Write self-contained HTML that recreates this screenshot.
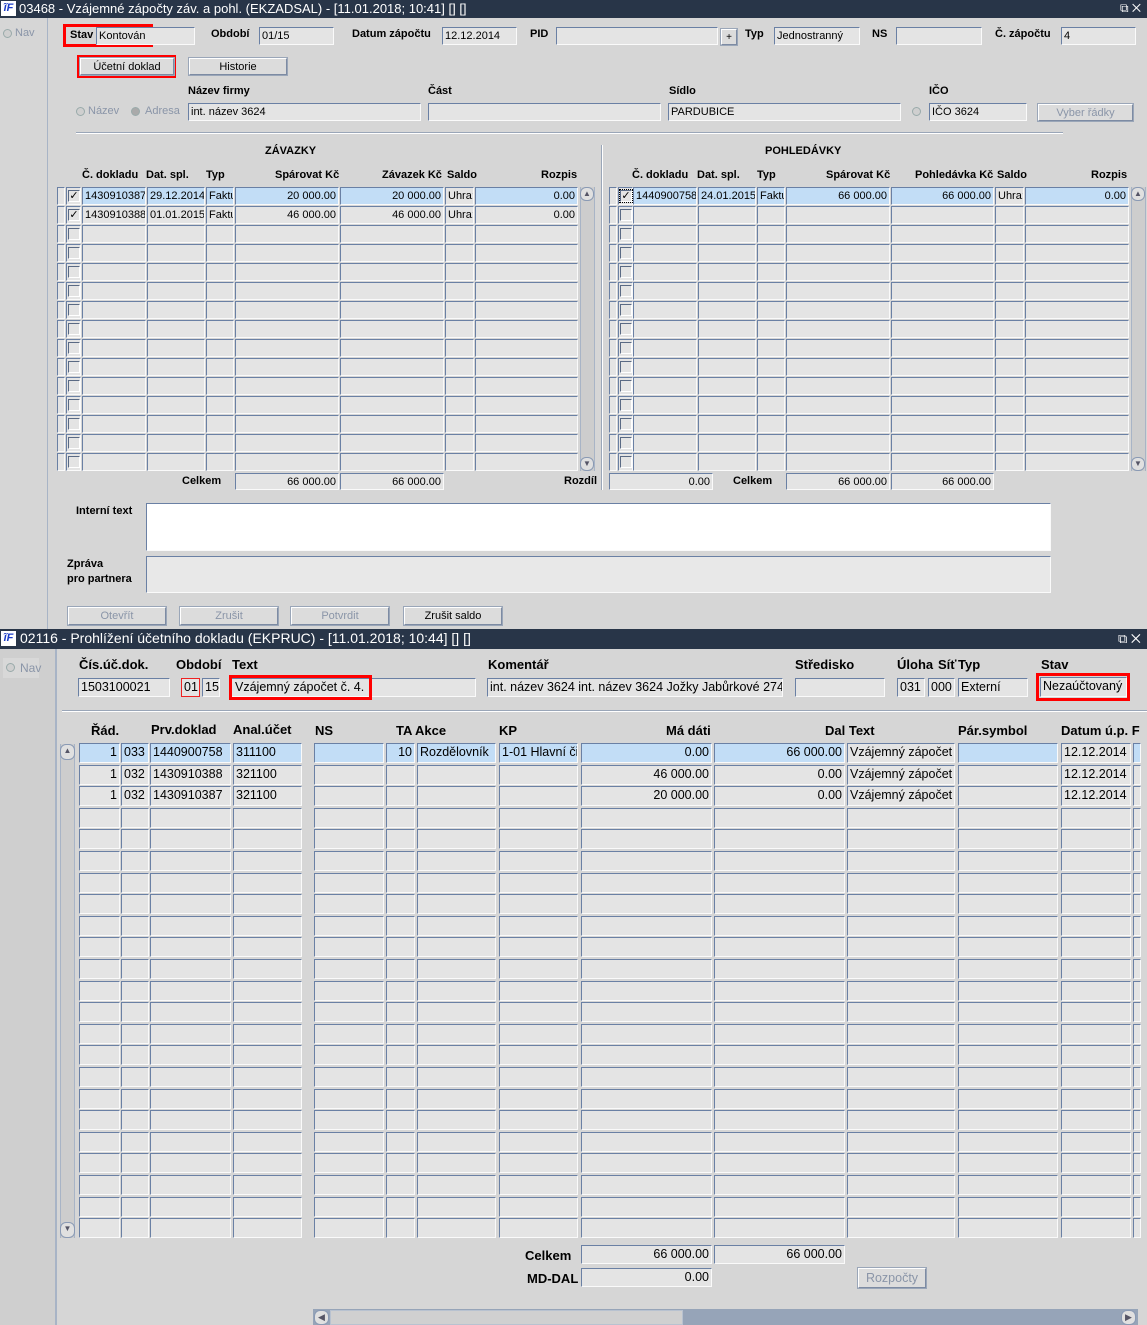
<!DOCTYPE html>
<html><head><meta charset="utf-8">
<style>
*{margin:0;padding:0;box-sizing:border-box}
body{width:1147px;height:1325px;position:relative;background:#d6d6d6;font-family:"Liberation Sans",Arial,sans-serif;color:#000;overflow:hidden}
div,span{position:absolute}
.tb{left:0;width:1147px;background:#283548;color:#fff;font-size:13px;white-space:nowrap}
.tb .lg{left:1px;top:1px;width:15px;height:15px;background:#fff;color:#1a3cc8;font:bold italic 11px "Liberation Sans",sans-serif;text-align:center;line-height:15px}
.f{background:#e4e4e4;border:1px solid;border-color:#6a80a4 #fafafa #fafafa #6a80a4;font-size:11px;padding-left:2px;white-space:nowrap;overflow:hidden;line-height:16px}
.b .f,.b.f{font-size:12.5px}
.s{background:#c2ddf6}
.r{text-align:right;padding-right:2px;padding-left:0}
.l{font-weight:bold;font-size:11px;white-space:nowrap}
.L{font-weight:bold;font-size:13px;white-space:nowrap}
.btn{background:#dcdcdc;border:1px solid;border-color:#fff #7d8ba3 #7d8ba3 #fff;font-size:11px;text-align:center;line-height:16px;box-shadow:0 0 0 1px #9aa6b8}
.dis{color:#8a95a8}
.red{border:3px solid #f00}
.rad{width:9px;height:9px;border-radius:50%;background:#cfcfcf;border:1px solid #9aa}
.cb{width:12px;height:12px;background:#e4e4e4;border:1px solid;border-color:#5a6a84 #fff #fff #5a6a84;font-size:11px;line-height:10px;text-align:center}
.sb{background:#cdcdcd;border-left:1px solid #a8b4c6;border-right:1px solid #a8b4c6}
.ar{width:14px;height:14px;border:1px solid #8a9ab4;border-radius:6px;background:#e0e0e0;font-size:8px;line-height:12px;text-align:center;color:#556}
</style></head><body>

<!-- TOP WINDOW -->
<div class="tb" style="top:0;height:18px;line-height:17px"><div class="lg">ĩF</div><span style="left:19px;top:0">03468 - Vzájemné zápočty záv. a pohl. (EKZADSAL) - [11.01.2018; 10:41] [] []</span><span style="left:1120px;top:0;font-size:12px">⧉ ✕</span></div>
<div style="left:0;top:18px;width:48px;height:611px;background:#d6d6d6;border-right:1px solid #a8b4c6"></div>
<div class="rad" style="left:3px;top:29px"></div><div style="left:15px;top:27px;font-size:11px;color:#8a95a8">Nav</div>

<div class="red" style="left:63px;top:24px;width:90px;height:23px"></div>
<div class="l" style="left:70px;top:29px">Stav</div>
<div class="f" style="left:96px;top:27px;width:99px;height:18px">Kontován</div>
<div class="l" style="left:211px;top:28px">Období</div><div class="f" style="left:259px;top:27px;width:75px;height:18px">01/15</div>
<div class="l" style="left:352px;top:28px">Datum zápočtu</div><div class="f" style="left:442px;top:27px;width:75px;height:18px">12.12.2014</div>
<div class="l" style="left:530px;top:28px">PID</div><div class="f" style="left:556px;top:27px;width:162px;height:18px"></div>
<div class="btn" style="left:721px;top:29px;width:16px;height:16px;font-size:10px">+</div>
<div class="l" style="left:745px;top:28px">Typ</div><div class="f" style="left:774px;top:27px;width:86px;height:18px">Jednostranný</div>
<div class="l" style="left:872px;top:28px">NS</div><div class="f" style="left:896px;top:27px;width:86px;height:18px"></div>
<div class="l" style="left:995px;top:28px">Č. zápočtu</div><div class="f" style="left:1061px;top:27px;width:75px;height:18px">4</div>

<div class="red" style="left:77px;top:55px;width:99px;height:23px"></div>
<div class="btn" style="left:80px;top:58px;width:94px;height:17px">Účetní doklad</div>
<div class="btn" style="left:189px;top:58px;width:98px;height:17px">Historie</div>

<div class="l" style="left:188px;top:85px">Název firmy</div><div class="l" style="left:428px;top:85px">Část</div><div class="l" style="left:669px;top:85px">Sídlo</div><div class="l" style="left:929px;top:85px">IČO</div>
<div class="rad" style="left:76px;top:107px"></div><div style="left:88px;top:105px;font-size:11px;color:#8a95a8">Název</div>
<div class="rad" style="left:131px;top:107px;background:#aaa"></div><div style="left:145px;top:105px;font-size:11px;color:#8a95a8">Adresa</div>
<div class="f" style="left:188px;top:103px;width:233px;height:18px">int. název 3624</div>
<div class="f" style="left:428px;top:103px;width:233px;height:18px"></div>
<div class="f" style="left:668px;top:103px;width:233px;height:18px">PARDUBICE</div>
<div class="rad" style="left:912px;top:107px"></div>
<div class="f" style="left:929px;top:103px;width:98px;height:18px">IČO 3624</div>
<div class="btn dis" style="left:1038px;top:104px;width:95px;height:17px">Vyber řádky</div>

<div style="left:76px;top:132px;width:987px;height:2px;border-top:1px solid #9aa6b8;border-bottom:1px solid #fff"></div>
<div style="left:601px;top:145px;width:2px;height:345px;border-left:1px solid #9aa6b8;border-right:1px solid #fff"></div>

<div class="l" style="left:265px;top:145px">ZÁVAZKY</div>
<div class="l" style="left:765px;top:145px">POHLEDÁVKY</div>
<div class="l" style="left:82px;top:169px">Č. dokladu</div><div class="l" style="left:146px;top:169px">Dat. spl.</div><div class="l" style="left:206px;top:169px">Typ</div><div class="l" style="left:275px;top:169px">Spárovat Kč</div><div class="l" style="left:382px;top:169px">Závazek Kč</div><div class="l" style="left:447px;top:169px">Saldo</div><div class="l" style="left:541px;top:169px">Rozpis</div>
<div class="l" style="left:632px;top:169px">Č. dokladu</div><div class="l" style="left:697px;top:169px">Dat. spl.</div><div class="l" style="left:757px;top:169px">Typ</div><div class="l" style="left:826px;top:169px">Spárovat Kč</div><div class="l" style="left:915px;top:169px">Pohledávka Kč</div><div class="l" style="left:997px;top:169px">Saldo</div><div class="l" style="left:1091px;top:169px">Rozpis</div>

<div id="g1"></div>

<!-- filled top rows -->
<div class="f s" style="left:82px;top:187px;width:64px;height:18px">1430910387</div><div class="f s" style="left:147px;top:187px;width:58px;height:18px">29.12.2014</div><div class="f s" style="left:206px;top:187px;width:28px;height:18px">Faktu</div><div class="f s r" style="left:235px;top:187px;width:104px;height:18px">20 000.00</div><div class="f s r" style="left:340px;top:187px;width:104px;height:18px">20 000.00</div><div class="f" style="left:445px;top:187px;width:29px;height:18px">Uhra:</div><div class="f s r" style="left:475px;top:187px;width:103px;height:18px">0.00</div>
<div class="f" style="left:82px;top:206px;width:64px;height:18px">1430910388</div><div class="f" style="left:147px;top:206px;width:58px;height:18px">01.01.2015</div><div class="f" style="left:206px;top:206px;width:28px;height:18px">Faktu</div><div class="f r" style="left:235px;top:206px;width:104px;height:18px">46 000.00</div><div class="f r" style="left:340px;top:206px;width:104px;height:18px">46 000.00</div><div class="f" style="left:445px;top:206px;width:29px;height:18px">Uhra:</div><div class="f r" style="left:475px;top:206px;width:103px;height:18px">0.00</div>
<div class="cb" style="left:68px;top:190px">✓</div><div class="cb" style="left:68px;top:209px">✓</div>
<div class="f s" style="left:633px;top:187px;width:64px;height:18px">1440900758</div><div class="f s" style="left:698px;top:187px;width:58px;height:18px">24.01.2015</div><div class="f s" style="left:757px;top:187px;width:28px;height:18px">Faktu</div><div class="f s r" style="left:786px;top:187px;width:104px;height:18px">66 000.00</div><div class="f s r" style="left:891px;top:187px;width:103px;height:18px">66 000.00</div><div class="f" style="left:995px;top:187px;width:29px;height:18px">Uhra:</div><div class="f s r" style="left:1025px;top:187px;width:104px;height:18px">0.00</div>
<div class="cb" style="left:620px;top:190px;outline:1px dotted #000">✓</div>

<!-- scrollbars top -->
<div class="sb" style="left:580px;top:187px;width:15px;height:284px"></div><div class="ar" style="left:580px;top:187px">▲</div><div class="ar" style="left:580px;top:457px">▼</div>
<div class="sb" style="left:1131px;top:187px;width:15px;height:284px"></div><div class="ar" style="left:1131px;top:187px">▲</div><div class="ar" style="left:1131px;top:457px">▼</div>

<div class="l" style="left:182px;top:475px">Celkem</div>
<div class="f r" style="left:235px;top:473px;width:104px;height:17px">66 000.00</div><div class="f r" style="left:340px;top:473px;width:104px;height:17px">66 000.00</div>
<div class="l" style="left:564px;top:475px">Rozdíl</div><div class="f r" style="left:609px;top:473px;width:104px;height:17px">0.00</div>
<div class="l" style="left:733px;top:475px">Celkem</div>
<div class="f r" style="left:786px;top:473px;width:104px;height:17px">66 000.00</div><div class="f r" style="left:891px;top:473px;width:103px;height:17px">66 000.00</div>

<div class="l" style="left:76px;top:505px">Interní text</div>
<div class="f" style="left:146px;top:503px;width:905px;height:48px;background:#fff"></div>
<div class="l" style="left:67px;top:557px;line-height:15px">Zpráva<br>pro partnera</div>
<div class="f" style="left:146px;top:556px;width:905px;height:37px;background:#e8e8e8"></div>

<div class="btn dis" style="left:68px;top:607px;width:98px;height:18px">Otevřít</div>
<div class="btn dis" style="left:180px;top:607px;width:98px;height:18px">Zrušit</div>
<div class="btn dis" style="left:291px;top:607px;width:98px;height:18px">Potvrdit</div>
<div class="btn" style="left:404px;top:607px;width:98px;height:18px">Zrušit saldo</div>

<!-- BOTTOM WINDOW -->
<div class="tb" style="top:629px;height:20px;line-height:19px;font-size:14px"><div class="lg" style="top:2px">ĩF</div><span style="left:20px;top:0">02116 - Prohlížení účetního dokladu (EKPRUC) - [11.01.2018; 10:44] [] []</span><span style="left:1118px;top:0;font-size:13px">⧉ ✕</span></div>
<div style="left:0;top:649px;width:57px;height:676px;background:#cfcfcf;border-right:2px solid #a8b4c6"></div>
<div style="left:3px;top:658px;width:36px;height:20px;background:#d8d8d8"></div>
<div class="rad" style="left:6px;top:663px"></div><div style="left:20px;top:661px;font-size:12px;color:#8a95a8">Nav</div>

<div class="L" style="left:79px;top:657px">Čís.úč.dok.</div><div class="L" style="left:176px;top:657px">Období</div><div class="L" style="left:232px;top:657px">Text</div><div class="L" style="left:488px;top:657px">Komentář</div><div class="L" style="left:795px;top:657px">Středisko</div><div class="L" style="left:897px;top:657px">Úloha</div><div class="L" style="left:938px;top:657px">Síť</div><div class="L" style="left:958px;top:657px">Typ</div><div class="L" style="left:1041px;top:657px">Stav</div>
<div class="b">
<div class="f" style="left:78px;top:678px;width:92px;height:19px">1503100021</div>
<div class="f" style="left:181px;top:678px;width:19px;height:19px;border:1px solid #e22">01</div>
<div class="f" style="left:202px;top:678px;width:18px;height:19px">15</div>
<div class="f" style="left:229px;top:678px;width:247px;height:19px"></div>
<div class="red" style="left:229px;top:675px;width:143px;height:25px;padding:1px 3px;font-size:12.5px;line-height:17px">Vzájemný zápočet č. 4.</div>
<div class="f" style="left:487px;top:678px;width:296px;height:19px">int. název 3624 int. název 3624 Jožky Jabůrkové 274</div>
<div class="f" style="left:795px;top:678px;width:90px;height:19px"></div>
<div class="f" style="left:897px;top:678px;width:28px;height:19px">031</div>
<div class="f" style="left:928px;top:678px;width:27px;height:19px">000</div>
<div class="f" style="left:958px;top:678px;width:70px;height:19px">Externí</div>
<div class="red" style="left:1036px;top:673px;width:94px;height:28px"></div>
<div class="f" style="left:1040px;top:677px;width:87px;height:20px">Nezaúčtovaný</div>
</div>
<div style="left:62px;top:710px;width:1085px;height:2px;border-top:1px solid #9aa6b8;border-bottom:1px solid #fff"></div>

<div class="L" style="left:91px;top:723px">Řád.</div><div class="L" style="left:151px;top:722px">Prv.doklad</div><div class="L" style="left:233px;top:722px">Anal.účet</div><div class="L" style="left:315px;top:723px">NS</div><div class="L" style="left:396px;top:723px">TA Akce</div><div class="L" style="left:499px;top:723px">KP</div><div class="L" style="left:666px;top:723px">Má dáti</div><div class="L" style="left:825px;top:723px">Dal Text</div><div class="L" style="left:958px;top:723px">Pár.symbol</div><div class="L" style="left:1061px;top:723px">Datum ú.p. F</div>

<div id="g2" class="b"></div>
<div class="b" id="g2f">
<div class="f s r" style="left:79px;top:743px;width:41px;height:20px">1</div><div class="f s" style="left:121px;top:743px;width:28px;height:20px">033</div><div class="f s" style="left:150px;top:743px;width:81px;height:20px">1440900758</div><div class="f s" style="left:233px;top:743px;width:69px;height:20px">311100</div><div class="f s" style="left:314px;top:743px;width:70px;height:20px"></div><div class="f s r" style="left:386px;top:743px;width:29px;height:20px">10</div><div class="f s" style="left:417px;top:743px;width:79px;height:20px">Rozdělovník</div><div class="f s" style="left:499px;top:743px;width:79px;height:20px">1-01 Hlavní čin</div><div class="f s r" style="left:581px;top:743px;width:131px;height:20px">0.00</div><div class="f s r" style="left:714px;top:743px;width:131px;height:20px">66 000.00</div><div class="f" style="left:847px;top:743px;width:108px;height:20px">Vzájemný zápočet</div><div class="f s" style="left:958px;top:743px;width:100px;height:20px"></div><div class="f" style="left:1061px;top:743px;width:70px;height:20px">12.12.2014</div><div class="f s" style="left:1133px;top:743px;width:8px;height:20px"></div>
<div class="f r" style="left:79px;top:765px;width:41px;height:20px">1</div><div class="f" style="left:121px;top:765px;width:28px;height:20px">032</div><div class="f" style="left:150px;top:765px;width:81px;height:20px">1430910388</div><div class="f" style="left:233px;top:765px;width:69px;height:20px">321100</div><div class="f r" style="left:581px;top:765px;width:131px;height:20px">46 000.00</div><div class="f r" style="left:714px;top:765px;width:131px;height:20px">0.00</div><div class="f" style="left:847px;top:765px;width:108px;height:20px">Vzájemný zápočet</div><div class="f" style="left:1061px;top:765px;width:70px;height:20px">12.12.2014</div>
<div class="f r" style="left:79px;top:786px;width:41px;height:20px">1</div><div class="f" style="left:121px;top:786px;width:28px;height:20px">032</div><div class="f" style="left:150px;top:786px;width:81px;height:20px">1430910387</div><div class="f" style="left:233px;top:786px;width:69px;height:20px">321100</div><div class="f r" style="left:581px;top:786px;width:131px;height:20px">20 000.00</div><div class="f r" style="left:714px;top:786px;width:131px;height:20px">0.00</div><div class="f" style="left:847px;top:786px;width:108px;height:20px">Vzájemný zápočet</div><div class="f" style="left:1061px;top:786px;width:70px;height:20px">12.12.2014</div>
</div>
<div class="sb" style="left:60px;top:744px;width:15px;height:494px"></div><div class="ar" style="left:60px;top:744px;width:15px;height:16px">▲</div><div class="ar" style="left:60px;top:1222px;width:15px;height:16px">▼</div>

<div class="L" style="left:525px;top:1248px">Celkem</div>
<div class="f r b" style="left:581px;top:1245px;width:131px;height:19px;font-size:12.5px">66 000.00</div><div class="f r" style="left:714px;top:1245px;width:131px;height:19px;font-size:12.5px">66 000.00</div>
<div class="L" style="left:527px;top:1271px">MD-DAL</div>
<div class="f r" style="left:581px;top:1268px;width:131px;height:19px;font-size:12.5px">0.00</div>
<div class="btn dis" style="left:858px;top:1268px;width:68px;height:20px;font-size:12.5px;line-height:18px">Rozpočty</div>

<div style="left:313px;top:1309px;width:825px;height:16px;background:#96a4b8"></div>
<div style="left:330px;top:1310px;width:353px;height:15px;background:#d0d0d0;border:1px solid #b8c2d0"></div>
<div class="ar" style="left:314px;top:1310px;width:15px;height:15px;font-size:9px">◀</div>
<div class="ar" style="left:1121px;top:1310px;width:15px;height:15px;font-size:9px">▶</div>

<script>
function grid(id,cols,y0,rh,h,from,n,skip){var o='';for(var r=from;r<n;r++){var y=Math.round(y0+r*rh);for(var c=0;c<cols.length;c++){if(skip&&skip(r,c))continue;o+='<div class="f" style="left:'+cols[c][0]+'px;top:'+y+'px;width:'+cols[c][1]+'px;height:'+h+'px"></div>';}}document.getElementById(id).insertAdjacentHTML('beforeend',o);}
var L=[[57,8],[66,15],[82,64],[147,58],[206,28],[235,104],[340,104],[445,29],[475,103]];
var R=[[609,8],[618,15],[633,64],[698,58],[757,28],[786,104],[891,103],[995,29],[1025,104]];
grid('g1',L,187,19,18,0,15,function(r,c){return r<2&&c>1});
grid('g1',R,187,19,18,0,15,function(r,c){return r<1&&c>1});
var cb='';for(var r=0;r<15;r++){var y=190+r*19;if(r>=2)cb+='<div class="cb" style="left:68px;top:'+y+'px"></div>';if(r>=1)cb+='<div class="cb" style="left:620px;top:'+y+'px"></div>';}
document.getElementById('g1').insertAdjacentHTML('beforeend',cb);
var B=[[79,41],[121,28],[150,81],[233,69],[314,70],[386,29],[417,79],[499,79],[581,131],[714,131],[847,108],[958,100],[1061,70],[1133,8]];
grid('g2',B,743,21.6,20,1,23,null);
</script>
</body></html>
